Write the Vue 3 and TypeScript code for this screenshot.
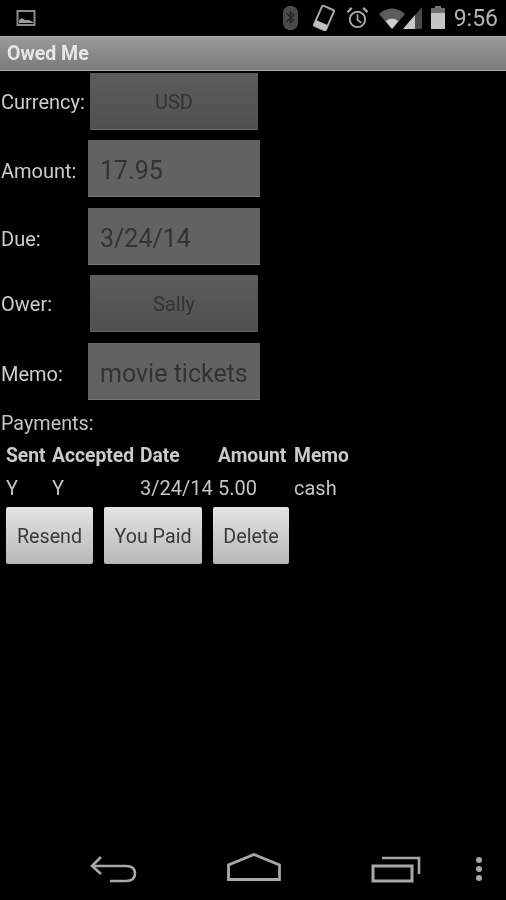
<script setup lang="ts">
interface FormRow { label: string; value: string; kind: 'button' | 'field' }

const rows: FormRow[] = [
  { label: 'Currency:', value: 'USD', kind: 'button' },
  { label: 'Amount:', value: '17.95', kind: 'field' },
  { label: 'Due:', value: '3/24/14', kind: 'field' },
  { label: 'Ower:', value: 'Sally', kind: 'button' },
  { label: 'Memo:', value: 'movie tickets', kind: 'field' },
]
const headers = ['Sent', 'Accepted', 'Date', 'Amount', 'Memo']
const payment = ['Y', 'Y', '3/24/14', '5.00', 'cash']
const actions = ['Resend', 'You Paid', 'Delete']
</script>

<template>
  <div class="screen">
    <header class="status">
      <svg class="pic" width="20" height="18" viewBox="0 0 20 18">
        <rect x="1.500" y="2" width="17" height="14" fill="none" stroke="#8a8a8a" stroke-width="2" />
        <path d="M3 14 L3 11 L6 9 L9 11 L13 11 L17 13 L17 14 Z" fill="#9a9a9a" />
      </svg>
      <div class="status-right">
        <svg width="15" height="26" viewBox="0 0 15 26">
          <rect x="0" y="1" width="15" height="24" rx="6.500" fill="#4a4a4a" />
          <path d="M4 8.500 L10.500 15 L7.500 18 L7.500 7 L10.500 10 L4 16.500" fill="none" stroke="#262626" stroke-width="1.300" />
        </svg>
        <svg class="rot" width="22" height="26" viewBox="0 0 22 26">
          <g transform="rotate(24 11 13)">
            <rect x="4.500" y="2" width="13" height="22" rx="1.500" fill="none" stroke="#a8a8a8" stroke-width="2" />
            <rect x="4.500" y="18" width="13" height="6" fill="#c0c0c0" />
          </g>
        </svg>
        <svg class="alarm" width="23" height="24" viewBox="0 0 24 24">
          <circle cx="12" cy="13.500" r="8" fill="none" stroke="#a8a8a8" stroke-width="2" />
          <path d="M12 8 V14 L16 17" fill="none" stroke="#a8a8a8" stroke-width="1.800" />
          <path d="M1.500 6 L6 1.500 M22.500 6 L18 1.500" stroke="#a8a8a8" stroke-width="2.400" />
        </svg>
        <svg class="net" width="43" height="24" viewBox="0 0 43 24">
          <path d="M0 8 Q13 -3 26 8 L13 23 Z" fill="#5c5c5c" />
          <path d="M6.500 15 Q13 10 19.500 15 L13 23 Z" fill="#d0d0d0" />
          <path d="M24 23 L43 1 L43 23 Z" fill="#4a4a4a" />
          <path d="M24 23 L36 9 L36 23 Z" fill="#c8c8c8" />
        </svg>
        <svg class="battery" width="14" height="24" viewBox="0 0 14 24">
          <rect x="4" y="0" width="6" height="3" fill="#777" />
          <rect x="0" y="2" width="14" height="21" fill="#6e6e6e" />
          <rect x="0" y="7" width="14" height="16" fill="#c4c4c4" />
        </svg>
        <span class="clock">9:56</span>
      </div>
    </header>

    <div class="titlebar">Owed Me</div>

    <main class="content">
      <section class="form">
        <div v-for="row in rows" :key="row.label" class="form-row" :class="{ 'is-field': row.kind === 'field' }">
          <span class="label">{{ row.label }}</span>
          <div :class="row.kind === 'button' ? 'select' : 'field'">{{ row.value }}</div>
        </div>
      </section>

      <div class="payments">Payments:</div>

      <div class="table">
        <span v-for="h in headers" :key="h" class="th">{{ h }}</span>
        <span v-for="(c, i) in payment" :key="i" class="td">{{ c }}</span>
      </div>

      <div class="actions">
        <button v-for="a in actions" :key="a" class="action" type="button">{{ a }}</button>
      </div>
    </main>

    <nav class="navbar">
      <svg class="nav-back" width="48" height="28" viewBox="0 0 48 28">
        <path d="M3 11 H37 Q46 11 46 18.500 Q46 26 37 26 H21" fill="none" stroke="#a8a8a8" stroke-width="2.600" />
        <path d="M12 2 L3 11 L12 19" fill="none" stroke="#a8a8a8" stroke-width="2.600" />
      </svg>
      <svg class="nav-home" width="54" height="28" viewBox="0 0 54 28">
        <path d="M1.500 26.500 V12 L27 1.500 L52.500 12 V26.500 Z" fill="none" stroke="#a8a8a8" stroke-width="2.800" />
      </svg>
      <svg class="nav-recent" width="50" height="28" viewBox="0 0 50 28">
        <rect x="2" y="11" width="39" height="15" fill="none" stroke="#a8a8a8" stroke-width="3" />
        <path d="M11 3 H48 V19" fill="none" stroke="#a8a8a8" stroke-width="2.600" />
      </svg>
      <div class="nav-more"><i></i><i></i><i></i></div>
    </nav>
  </div>
</template>

<style scoped>
.screen {
  width: 506px;
  height: 900px;
  background: #000;
  color: #cfcfcf;
  font-family: Roboto, "Liberation Sans", sans-serif;
  display: flex;
  flex-direction: column;
  overflow: hidden;
  filter: blur(0.6px);
}
.status {
  height: 36px;
  flex: none;
  display: flex;
  align-items: center;
  justify-content: space-between;
  padding: 0 8px 0 16px;
  box-sizing: border-box;
}
.status-right {
  display: flex;
  align-items: center;
}
.rot { margin-left: 15px; }
.alarm { margin-left: 11px; }
.net { margin-left: 10px; }
.battery { margin-left: 9px; }
.clock {
  margin-left: 9px;
  font-size: 23px;
  color: #b4b4b4;
}
.titlebar {
  height: 35px;
  flex: none;
  box-sizing: border-box;
  padding-left: 7px;
  line-height: 34px;
  font-size: 19.500px;
  font-weight: 700;
  color: #e6e6e6;
  background: linear-gradient(#9a9a9a, #7a7a7a);
  border-top: 1px solid #a8a8a8;
  border-bottom: 1px solid #b0b0b0;
}
.content {
  flex: 1;
  padding-top: 2px;
  display: flex;
  flex-direction: column;
}
.form {
  display: grid;
  grid-auto-rows: 67.400px;
}
.form-row {
  display: flex;
  align-items: flex-start;
}
.label {
  width: 88px;
  flex: none;
  padding-left: 1px;
  box-sizing: border-box;
  font-size: 20px;
  line-height: 59px;
  color: #cdcdcd;
  white-space: nowrap;
}
.is-field .label {
  line-height: 63px;
}
.select,
.field {
  height: 57px;
  box-sizing: border-box;
  color: #333;
}
.select {
  width: 168px;
  margin-left: 2px;
  text-align: center;
  font-size: 20px;
  line-height: 59px;
  background: linear-gradient(#5c5c5c, #505050);
  border-bottom: 1px solid #666;
  border-radius: 1px;
}
.field {
  width: 172px;
  padding-left: 12px;
  font-size: 25px;
  line-height: 62px;
  background: #626262;
  border-bottom: 1px solid #7a7a7a;
}
.payments {
  margin-top: 2.500px;
  padding-left: 1px;
  font-size: 19.800px;
  line-height: 24px;
  color: #c4c4c4;
}
.table {
  margin-top: 4px;
  padding-left: 6px;
  display: grid;
  grid-template-columns: 46px 88px 78px 76px auto;
  grid-auto-rows: 32px;
  justify-content: start;
}
.th {
  font-size: 19.300px;
  font-weight: 700;
  line-height: 32px;
  color: #cacaca;
  white-space: nowrap;
}
.td {
  font-size: 20px;
  line-height: 32px;
  color: #c4c4c4;
  white-space: nowrap;
}
.actions {
  margin-top: 3px;
  padding-left: 6px;
  display: flex;
  gap: 11px;
}
.action {
  height: 57px;
  padding: 2px 0 0;
  border: 0;
  border-radius: 2px;
  background: linear-gradient(#e4e4e4, #b8b8b8);
  font: 19.700px Roboto, "Liberation Sans", sans-serif;
  color: #3a3a3a;
}
.action:nth-child(1) { width: 87px; }
.action:nth-child(2) { width: 98px; }
.action:nth-child(3) { width: 76px; }
.navbar {
  position: relative;
  height: 60px;
  flex: none;
}
.nav-back { position: absolute; left: 89px; top: 15px; }
.nav-home { position: absolute; left: 227px; top: 13px; }
.nav-recent { position: absolute; left: 371px; top: 15px; }
.nav-more {
  position: absolute;
  left: 476px;
  top: 17px;
  display: flex;
  flex-direction: column;
  gap: 3px;
}
.nav-more i {
  width: 6px;
  height: 6px;
  border-radius: 50%;
  background: #a8a8a8;
}
</style>

<style>
html, body { background: #000; }
</style>
